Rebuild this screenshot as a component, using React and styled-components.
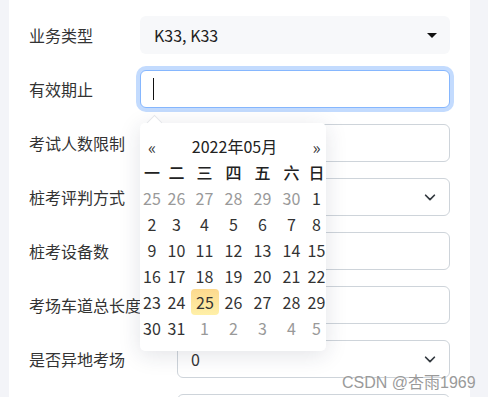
import styled, { createGlobalStyle } from 'styled-components'

const GlobalStyle = createGlobalStyle`
  html, body {
    margin: 0;
    padding: 0;
    background: #f3f4f8;
    font-family: 'Noto Sans CJK SC', 'Noto Sans', sans-serif;
  }
`

const weekDays = ['一', '二', '三', '四', '五', '六', '日']

const days = [
  [25, 26, 27, 28, 29, 30, 1],
  [2, 3, 4, 5, 6, 7, 8],
  [9, 10, 11, 12, 13, 14, 15],
  [16, 17, 18, 19, 20, 21, 22],
  [23, 24, 25, 26, 27, 28, 29],
  [30, 31, 1, 2, 3, 4, 5],
]

function Chevron() {
  return (
    <svg width='14' height='14' viewBox='0 0 16 16' fill='none'>
      <path d='M3 6l5 5 5-5' stroke='#343a40' strokeWidth='2' strokeLinecap='round' strokeLinejoin='round' />
    </svg>
  )
}

function DatePicker() {
  return (
    <Popup>
      <PopupArrow />
      <CalGrid>
        <NavCell>«</NavCell>
        <MonthTitle>2022年05月</MonthTitle>
        <NavCell>»</NavCell>
        {weekDays.map((d) => (
          <WeekCell key={d}>{d}</WeekCell>
        ))}
        {days.map((week, r) =>
          week.map((d, c) => {
            const muted = (r === 0 && d > 20) || (r === 5 && d < 10)
            const active = r === 4 && d === 25
            return (
              <DayCell key={`${r}-${c}`} muted={muted} active={active}>
                {d}
              </DayCell>
            )
          })
        )}
      </CalGrid>
    </Popup>
  )
}

export default function App() {
  return (
    <>
      <GlobalStyle />
      <Page>
        <Gutter />
        <Card>
          <Row>
            <Label>业务类型</Label>
            <Control>
              <FilledSelect>
                K33, K33
                <Caret />
              </FilledSelect>
            </Control>
          </Row>
          <Row>
            <Label>有效期止</Label>
            <Control>
              <FocusInput>
                <TextCaret />
              </FocusInput>
              <DatePicker />
            </Control>
          </Row>
          <Row>
            <Label>考试人数限制</Label>
            <Control>
              <Input />
            </Control>
          </Row>
          <Row>
            <Label>桩考评判方式</Label>
            <Control>
              <Select>
                <span />
                <Chevron />
              </Select>
            </Control>
          </Row>
          <Row>
            <Label>桩考设备数</Label>
            <Control>
              <Input />
            </Control>
          </Row>
          <Row>
            <Label>考场车道总长度</Label>
            <Control>
              <Input />
            </Control>
          </Row>
          <Row>
            <Label wide>是否异地考场</Label>
            <Control>
              <Select>
                <span>0</span>
                <Chevron />
              </Select>
            </Control>
          </Row>
          <Row>
            <Label wide />
            <Control>
              <Input />
            </Control>
          </Row>
        </Card>
        <Watermark>CSDN @杏雨1969</Watermark>
      </Page>
    </>
  )
}

const Page = styled.div`
  display: flex;
  width: 488px;
  height: 397px;
  overflow: hidden;
  position: relative;
  background: #f3f4f8;
`

const Gutter = styled.div`
  width: 9px;
  flex-shrink: 0;
`

const Card = styled.div`
  width: 461px;
  flex-shrink: 0;
  background: #fff;
  padding: 16px 20px 0 20px;
  box-sizing: border-box;
  display: flex;
  flex-direction: column;
  gap: 16px;
`

const Row = styled.div`
  display: flex;
  align-items: center;
  height: 38px;
  flex-shrink: 0;
`

const Label = styled.div`
  width: ${(props) => (props.wide ? '148px' : '111px')};
  flex-shrink: 0;
  font-size: 16px;
  color: #333;
  white-space: nowrap;
`

const Control = styled.div`
  flex: 1;
  height: 100%;
  position: relative;
`

const Input = styled.div`
  height: 100%;
  box-sizing: border-box;
  border: 1px solid #ced4da;
  border-radius: 6px;
  background: #fff;
`

const FocusInput = styled(Input)`
  border-color: #86b7fe;
  box-shadow: 0 0 0 4px #c3dbfe;
  display: flex;
  align-items: center;
  padding-left: 12px;
`

const TextCaret = styled.span`
  width: 1px;
  height: 22px;
  background: #111;
`

const Select = styled(Input)`
  display: flex;
  align-items: center;
  justify-content: space-between;
  padding: 0 12px 0 13px;
  font-size: 16px;
  color: #333;
`

const FilledSelect = styled.div`
  height: 100%;
  box-sizing: border-box;
  border-radius: 6px;
  background: #f7f8fa;
  display: flex;
  align-items: center;
  justify-content: space-between;
  padding: 0 13px 0 14px;
  font-size: 16px;
  color: #222;
`

const Caret = styled.span`
  width: 0;
  height: 0;
  border-left: 5px solid transparent;
  border-right: 5px solid transparent;
  border-top: 5px solid #111;
`

const Popup = styled.div`
  position: absolute;
  top: 53px;
  left: 0;
  width: 186px;
  background: #fff;
  border-radius: 5px;
  box-shadow: 0 4px 22px rgba(30, 40, 70, 0.13);
  padding: 10px 0;
  z-index: 5;
`

const PopupArrow = styled.div`
  position: absolute;
  top: -6px;
  left: 9px;
  width: 10px;
  height: 10px;
  background: #fff;
  border-left: 1px solid #e4e6ea;
  border-top: 1px solid #e4e6ea;
  transform: rotate(45deg);
`

const CalGrid = styled.div`
  display: grid;
  grid-template-columns: 22px 27px 29px 29px 29px 29px 21px;
  grid-auto-rows: 26px;
  padding-left: 1px;
  font-size: 16px;
  color: #333;
`

const Cell = styled.div`
  display: flex;
  align-items: center;
  justify-content: center;
  white-space: nowrap;
`

const NavCell = styled(Cell)`
  font-size: 17px;
  color: #333;
`

const MonthTitle = styled(Cell)`
  grid-column: span 5;
  color: #222;
`

const WeekCell = styled(Cell)`
  font-weight: 500;
  color: #222;
`

const DayCell = styled(Cell)`
  color: ${(props) => (props.muted ? '#999' : '#333')};
  border-radius: 4px;
  background: ${(props) =>
    props.active ? 'linear-gradient(180deg, #fcd98e 0%, #fff0a8 100%)' : 'transparent'};
  margin: ${(props) => (props.active ? '0 0 0 1px' : '0')};
`

const Watermark = styled.div`
  position: absolute;
  left: 342px;
  top: 369px;
  font-family: 'Liberation Sans', 'Noto Sans CJK SC', sans-serif;
  font-size: 16px;
  color: #9a9a9a;
  text-shadow: 0 0 1px #fff;
  white-space: nowrap;
`
